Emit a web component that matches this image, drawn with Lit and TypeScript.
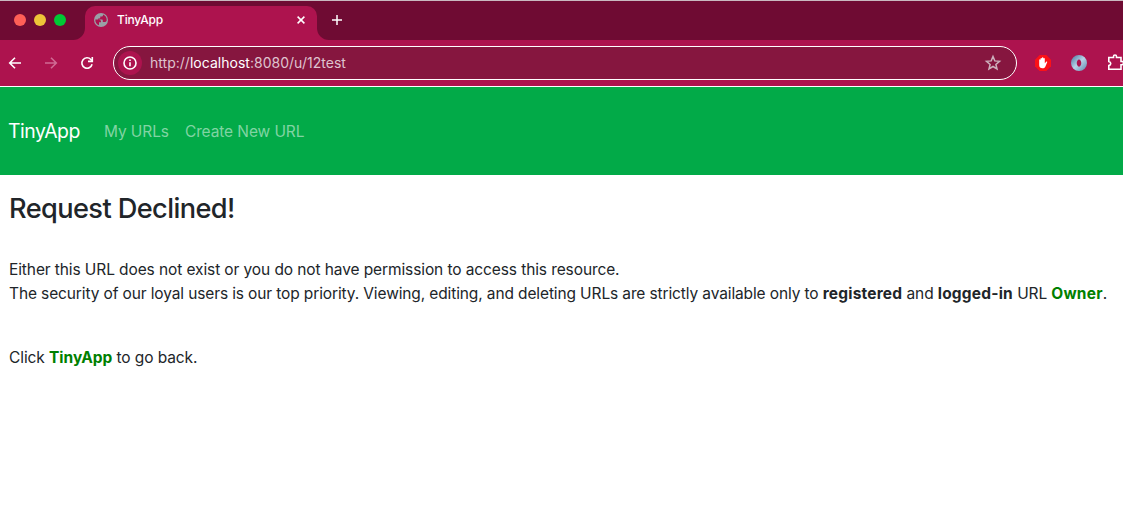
import { LitElement, html, css } from "lit";
import { customElement } from "lit/decorators.js";

@customElement("browser-chrome")
class BrowserChrome extends LitElement {
  static styles = css`
    :host { display: block; background: #ad134e; color: #fff; }
    * { box-sizing: border-box; }
    svg { display: block; flex: none; }
    .tabs { display: flex; height: 40px; border-top: 1px solid #c9b9c0; }
    .lights { width: 85px; background: #6f0b33; border-bottom-right-radius: 12px; display: flex; gap: 8px; padding: 13px 0 0 14px; flex: none; }
    .light { width: 12px; height: 12px; border-radius: 50%; }
    .red { background: #ff5f57; }
    .yellow { background: #edc438; }
    .green { background: #00ca35; }
    .tab-well { width: 232px; flex: none; padding-top: 5px; background: linear-gradient(#6f0b33 20px, #ad134e 20px); }
    .tab { height: 34px; background: #ad134e; border-radius: 10px 10px 0 0; display: flex; align-items: center; padding: 0 11px 6px 9px; }
    .title { font-size: 12px; font-weight: 500; line-height: 16px; margin-left: 9px; flex: 1; letter-spacing: -0.2px; }
    .rest { flex: 1; background: #6f0b33; border-bottom-left-radius: 12px; padding: 13px 0 0 14px; }
    .bar { display: flex; height: 46px; align-items: center; padding: 0 0 0 8px; overflow: hidden; }
    .fwd { margin-left: 22px; }
    .reload { margin-left: 22px; }
    .address { width: 904px; height: 34px; flex: none; margin-left: 19px; border: 1px solid #fff; border-radius: 17px; background: #86163f; display: flex; align-items: center; padding: 0 14px 0 4px; }
    .info { width: 24px; height: 24px; border-radius: 50%; background: #ad134e; display: grid; place-items: center; }
    .url { flex: 1; margin-left: 8px; font-size: 14px; line-height: 20px; color: #dfc3ce; letter-spacing: 0.02px; }
    .host { color: #fff; }
    .ext1 { margin-left: 18px; }
    .ext2 { margin-left: 20px; }
    .ext3 { margin-left: 20px; }
  `;
  render() {
    return html`
      <div class="tabs">
        <div class="lights"><div class="light red"></div><div class="light yellow"></div><div class="light green"></div></div>
        <div class="tab-well"><div class="tab">
          <svg width="14" height="14" viewBox="0 0 14 14"><circle cx="7" cy="7" r="7" fill="#9aa0a6"/><path d="M1.300 6.600H4.500c1.300 0 2.500.8 2.500 2v.7H5v2.900C2.800 11.600 1.100 9.500 1.300 6.600ZM9 1.600v.6c0 .8-.7 1.300-1.500 1.300H6.300v1.300c0 .5-.4.8-1 .8H4.200v1h3.600c.6 0 1 .5 1 1v1.300h2.400c.7 0 1.200-.5 1.500-1.300C13 4.800 11.500 2.500 9 1.600Z" fill="#ad134e"/></svg>
          <span class="title">TinyApp</span>
          <svg width="10" height="10" viewBox="0 0 10 10" stroke="#fff" stroke-width="1.500"><path d="m1.600 1.600 6.800 6.800m0-6.800L1.600 8.400"/></svg>
        </div></div>
        <div class="rest"><svg width="12" height="12" viewBox="0 0 12 12" stroke="#fff" stroke-width="1.500"><path d="M6 1v10M1 6h10"/></svg></div>
      </div>
      <div class="bar">
        <svg width="14" height="14" viewBox="0 0 14 14" fill="none" stroke="#fff" stroke-width="1.600"><path d="M13 7H2M7 1.700 1.700 7 7 12.300"/></svg>
        <svg class="fwd" width="14" height="14" viewBox="0 0 14 14" fill="none" stroke="#d06b94" stroke-width="1.600"><path d="M1 7h11M7 1.700 12.300 7 7 12.300"/></svg>
        <svg class="reload" width="14" height="14" viewBox="0 0 14 14" fill="none" stroke="#fff" stroke-width="1.600"><path d="M12.100 8.300a5.200 5.200 0 1 1-1.200-4.800l1 1.100"/><path d="M12.300 1v4.400H8" /></svg>
        <div class="address">
          <span class="info"><svg width="14" height="14" viewBox="0 0 14 14" fill="none" stroke="#fff" stroke-width="1.600"><circle cx="7" cy="7" r="6"/><path d="M7 6.300v4M7 3.600v1.500"/></svg></span>
          <span class="url">http://<span class="host">localhost</span>:8080/u/12test</span>
          <svg width="18" height="18" viewBox="0 0 18 18" fill="none" stroke="#cdb1bd" stroke-width="1.500"><path d="m9 2.500 1.800 4.400 4.700.4-3.600 3.100 1.100 4.600L9 12.500l-4 2.500 1.100-4.600-3.600-3.100 4.700-.4Z"/></svg>
        </div>
        <svg class="ext1" width="16" height="16" viewBox="0 0 16 16"><path d="M4.700 0h6.600L16 4.700v6.600L11.300 16H4.700L0 11.300V4.700Z" fill="#fb1118"/><path d="M4.200 8.200V5c0-.9 1.300-.9 1.300 0V3.700c0-.9 1.400-.9 1.400 0V3.100c0-1 1.500-1 1.500 0v.6c0-.9 1.400-.9 1.400 0v4.500l1.200-1.300c.7-.7 1.600-.1 1.100.7L10.300 11.700C9.600 12.900 8.900 13.300 7.500 13.300 5.300 13.300 4.200 12 4.200 10.300Z" fill="#fff"/></svg>
        <svg class="ext2" width="16" height="16" viewBox="0 0 16 16"><defs><linearGradient id="ring" x2="1" y2="1"><stop stop-color="#46749d"/><stop offset=".5" stop-color="#b7d2e7"/><stop offset="1" stop-color="#5b87ae"/></linearGradient></defs><path fill="url(#ring)" fill-rule="evenodd" d="M8 0a8 8 0 1 1 0 16A8 8 0 0 1 8 0Zm0 4.200c-3 1.400-3 6.200 0 7.600 3-1.400 3-6.200 0-7.600Z"/></svg>
        <svg class="ext3" width="18" height="18" viewBox="0 0 18 18" fill="none" stroke="#fff" stroke-width="1.600"><path d="M1.800 3.500h4.700V2.500a1.500 1.500 0 0 1 3 0v1H14v4h1a1.500 1.500 0 0 1 0 3.200h-1V15.200H1.800v-3.700c2.600-.4 2.600-3.600 0-4Z"/></svg>
      </div>`;
  }
}

@customElement("app-root")
class AppRoot extends LitElement {
  static styles = css`
    :host { display: block; height: 521px; overflow: hidden; background: #fff; color: #212529; font-family: Inter, "Liberation Sans", sans-serif; font-size: 15.5px; line-height: 24px; }
    * { box-sizing: border-box; }
    nav { height: 89px; border-top: 1px solid #fff; background: #02aa48; display: flex; align-items: center; padding: 0 8px; color: #fff; white-space: nowrap; }
    .brand { font-size: 19.4px; line-height: 30px; width: 96px; letter-spacing: -0.45px; }
    .link { color: #80d4a3; margin-right: 16px; padding-top: 2px; letter-spacing: -0.1px; }
    main { padding: 17px 0 0 9px; white-space: nowrap; }
    h1 { font-size: 27.2px; line-height: 34px; font-weight: 500; margin: 0 0 32px; letter-spacing: -0.6px; }
    p { margin: 0; letter-spacing: -0.1px; }
    .policy { letter-spacing: -0.122px; }
    .back { margin-top: 40px; }
    .accent { color: #008000; }
    b { font-weight: 700; letter-spacing: 0.2px; }
    .back b { letter-spacing: 0; }
  `;
  render() {
    return html`
      <browser-chrome></browser-chrome>
      <nav><span class="brand">TinyApp</span><span class="link">My URLs</span><span class="link">Create New URL</span></nav>
      <main>
        <h1><span>Request Declined!</span></h1>
        <p><span>Either this URL does not exist or you do not have permission to access this resource.</span></p>
        <p class="policy"><span>The security of our loyal users is our top priority. Viewing, editing, and deleting URLs are strictly available only to <b>registered</b> and <b>logged-in</b> URL <b class="accent">Owner</b>.</span></p>
        <p class="back"><span>Click <b class="accent">TinyApp</b> to go back.</span></p>
      </main>`;
  }
}
